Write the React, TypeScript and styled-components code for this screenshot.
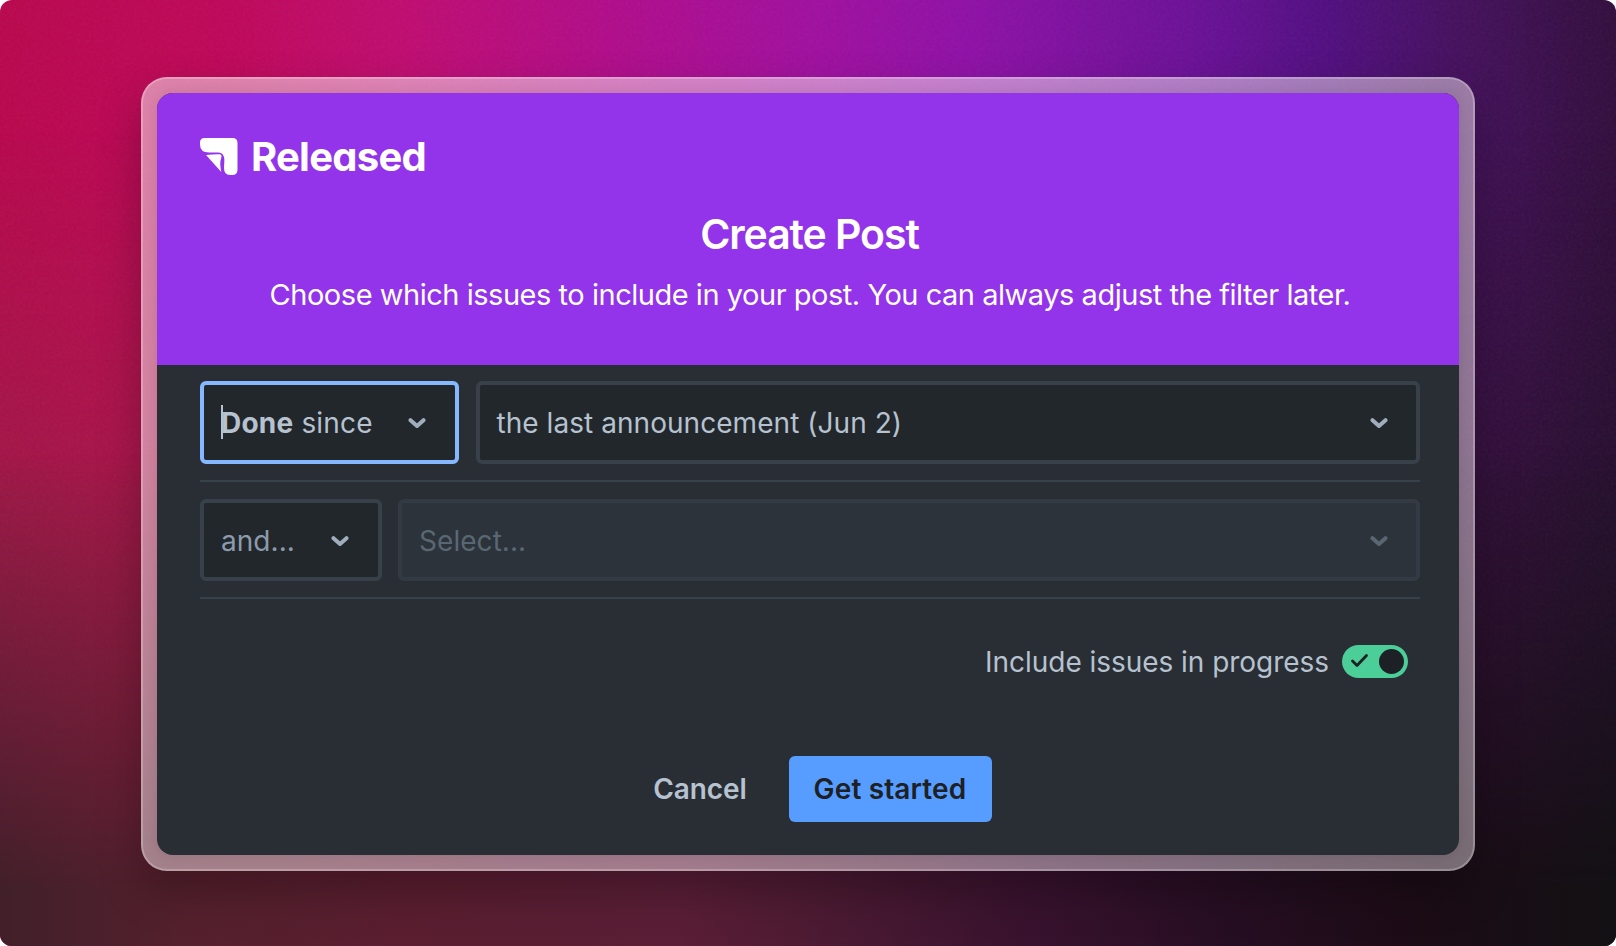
import React from "react";
import styled, { createGlobalStyle, css } from "styled-components";

const Global = createGlobalStyle`
  * { box-sizing: border-box; }
  body { margin: 0; background: #fff; font-family: Inter, "Liberation Sans", sans-serif; }
`;

const band = css`
  content: "";
  position: absolute;
  inset: 0;
  pointer-events: none;
`;

const Backdrop = styled.main`
  position: relative;
  isolation: isolate;
  width: 1616px;
  height: 946px;
  padding: 77px 141px 75px;
  border-radius: 12px;
  overflow: hidden;
  background: linear-gradient(90deg, #b9084e 0%, #bf085a 14%, #bf0c70 25%, #b00c8a 38%, #a00f9e 50%, #8e10a6 60%, #6a1096 74%, #510e80 82%, #43105a 91%, #320e3d 100%);
  &::before {
    ${band}
    z-index: -2;
    background: linear-gradient(90deg, #a01646 0%, #a81448 10%, #800f50 40%, #500f50 70%, #340e3c 90%, #260e2e 100%);
    mask-image: linear-gradient(180deg, transparent 14%, #000 52%);
  }
  &::after {
    ${band}
    z-index: -1;
    background: linear-gradient(90deg, #41202a 0%, #55202d 12%, #5a1e30 25%, #5a1e36 42%, #4a1a32 52%, #38122e 64%, #260e22 76%, #1c0c16 88%, #131114 100%);
    mask-image: linear-gradient(180deg, transparent 48%, #000 94%);
  }
`;

const Grain = styled.svg`
  position: absolute;
  inset: 0;
  z-index: -1;
  opacity: 0.05;
`;

const Glass = styled.div`
  display: flex;
  width: 1334px;
  height: 794px;
  padding: 14px;
  border: 2px solid rgba(255, 255, 255, 0.24);
  border-radius: 26px;
  background: linear-gradient(150deg, rgba(250, 240, 245, 0.52), rgba(250, 240, 245, 0.42));
  background-origin: border-box;
  box-shadow: 0 20px 44px rgba(0, 0, 0, 0.28);
`;

const Dialog = styled.section`
  flex: 1;
  display: flex;
  flex-direction: column;
  border-radius: 16px;
  overflow: hidden;
  background: #292d34;
  box-shadow: 0 0 14px rgba(0, 0, 0, 0.12);
`;

const Header = styled.header`
  height: 272px;
  padding: 42px 43px 0 42px;
  background: #9333ea;
  color: #fff;
`;

const Brand = styled.div`
  display: flex;
  align-items: center;
  gap: 13px;
  height: 42px;
`;

const Wordmark = styled.span`
  padding-top: 2px;
  font-size: 40px;
  line-height: 42px;
  font-weight: 700;
  letter-spacing: -0.75px;
  font-feature-settings: "cv11";
`;

const Title = styled.h1`
  margin: 32px 0 0;
  font-size: 41px;
  line-height: 50px;
  font-weight: 600;
  letter-spacing: -1.08px;
  text-align: center;
  padding-left: 4px;
`;

const Subtitle = styled.p`
  margin: 16px 0 0;
  padding-left: 5px;
  font-size: 29px;
  line-height: 40px;
  letter-spacing: -0.47px;
  text-align: center;
  white-space: nowrap;
`;

const Body = styled.div`
  padding: 16px 39px 0 43px;
`;

const FilterRow = styled.div<{ $gap: number }>`
  display: flex;
  gap: ${(p) => p.$gap}px;
  width: 1220px;
  padding-bottom: 16px;
  margin-bottom: 17px;
  border-bottom: 2px solid #38424b;
`;

type Tone = "focused" | "normal" | "disabled";

const borders: Record<Tone, string> = { focused: "#85b8ff", normal: "#38414a", disabled: "#333a43" };

const Select = styled.div<{ $tone: Tone; $width?: number; $placeholder?: boolean }>`
  display: flex;
  align-items: center;
  justify-content: space-between;
  ${(p) => (p.$width ? `width: ${p.$width}px; flex: none;` : "flex: 1;")}
  height: 82.5px;
  padding: 2px 28.5px 0 17px;
  border: 4px solid ${(p) => borders[p.$tone]};
  border-radius: 6px;
  background: ${(p) => (p.$tone === "disabled" ? "#2c333a" : "#22272b")};
  color: ${(p) => (p.$tone === "disabled" ? "#596773" : p.$placeholder ? "#8c9bab" : "#b6c2cf")};
  font-size: 28px;
  line-height: 36px;
  white-space: nowrap;
`;

const Value = styled.span<{ $spacing?: number }>`
  position: relative;
  letter-spacing: ${(p) => p.$spacing ?? 0.05}px;
`;

const Caret = styled.i`
  position: absolute;
  left: 0;
  top: 0;
  width: 2px;
  height: 34px;
  background: #b6c2cf;
`;

const ChevronSvg = styled.svg<{ $dim?: boolean }>`
  flex: none;
  color: ${(p) => (p.$dim ? "#596773" : "#9fadbc")};
`;

const Chevron = ({ dim }: { dim?: boolean }) => (
  <ChevronSvg $dim={dim} width="18" height="12" viewBox="0 0 18 12" fill="none">
    <path d="M2.500 3.200L9 9L15.500 3.200" stroke="currentColor" strokeWidth="4" strokeLinecap="round" strokeLinejoin="round" />
  </ChevronSvg>
);

const ToggleRow = styled.label`
  display: flex;
  align-items: center;
  justify-content: flex-end;
  gap: 12.5px;
  margin-top: 44px;
  height: 36px;
  padding-right: 12.5px;
  color: #b6c2cf;
  font-size: 28px;
  letter-spacing: -0.04px;
`;

const ToggleText = styled.span`
  padding-top: 2px;
`;

const Track = styled.span`
  display: flex;
  align-items: center;
  justify-content: space-between;
  width: 66px;
  height: 33px;
  padding: 0 4px 0 8.5px;
  border-radius: 17px;
  background: #4bce97;
`;

const Knob = styled.span`
  width: 25px;
  height: 25px;
  border-radius: 50%;
  background: #1d2125;
`;

const Actions = styled.footer`
  display: flex;
  gap: 9px;
  margin: 77px 0 0 420.5px;
`;

const Button = styled.button<{ $primary?: boolean }>`
  width: ${(p) => (p.$primary ? 203 : 159)}px;
  height: 66px;
  padding: 0;
  border: 0;
  border-radius: 6px;
  background: ${(p) => (p.$primary ? "#579dff" : "transparent")};
  color: ${(p) => (p.$primary ? "#1d2125" : "#b6c2cf")};
  font: 600 28px/36px Inter, "Liberation Sans", sans-serif;
  letter-spacing: ${(p) => (p.$primary ? 0.15 : -0.1)}px;
`;

export default function App() {
  return (
    <>
      <Global />
      <Backdrop>
        <Grain width="1616" height="946">
          <filter id="grain">
            <feTurbulence type="fractalNoise" baseFrequency="0.35" numOctaves="2" />
            <feColorMatrix type="saturate" values="0.3" />
          </filter>
          <rect width="1616" height="946" filter="url(#grain)" />
        </Grain>
        <Glass>
          <Dialog>
            <Header>
              <Brand>
                <svg width="39" height="39" viewBox="0 0 39 39" fill="#fff">
                  <path d="M5.500 1H33.500Q38.500 1 38.500 6V32.500Q38.500 38 33 38H31Q25 38 25 31C25 26 26 23 24.800 19.500Q23.500 15.500 19 15.500H10Q1 15.500 1 7.500V5.500Q1 1 5.500 1Z" />
                  <path d="M7 18Q15 17 20.500 17.200Q23.300 17.500 22.200 21Q20.300 26 22.300 35Z" />
                </svg>
                <Wordmark>Released</Wordmark>
              </Brand>
              <Title>Create Post</Title>
              <Subtitle>Choose which issues to include in your post. You can always adjust the filter later.</Subtitle>
            </Header>
            <Body>
              <FilterRow $gap={17}>
                <Select $tone="focused" $width={258.5}>
                  <Value $spacing={0.2}>
                    <Caret />
                    <b>Done</b> since
                  </Value>
                  <Chevron />
                </Select>
                <Select $tone="normal">
                  <Value>the last announcement (Jun 2)</Value>
                  <Chevron />
                </Select>
              </FilterRow>
              <FilterRow $gap={16.5}>
                <Select $tone="normal" $width={181.5} $placeholder>
                  <Value>and...</Value>
                  <Chevron />
                </Select>
                <Select $tone="disabled">
                  <Value>Select...</Value>
                  <Chevron dim />
                </Select>
              </FilterRow>
              <ToggleRow>
                <ToggleText>Include issues in progress</ToggleText>
                <Track>
                  <svg width="20" height="16" viewBox="0 0 20 16" fill="none">
                    <path d="M2.500 8L7 12.500L16.500 2.500" stroke="#1d2125" strokeWidth="2.800" strokeLinecap="round" strokeLinejoin="round" />
                  </svg>
                  <Knob />
                </Track>
              </ToggleRow>
              <Actions>
                <Button>Cancel</Button>
                <Button $primary>Get started</Button>
              </Actions>
            </Body>
          </Dialog>
        </Glass>
      </Backdrop>
    </>
  );
}
